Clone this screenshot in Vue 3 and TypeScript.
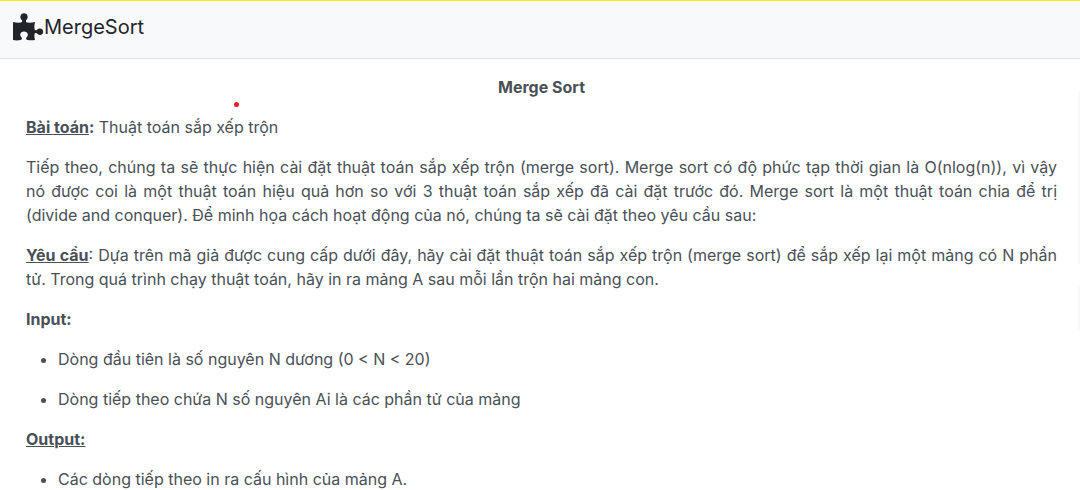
<script setup lang="ts">
const title: string = 'MergeSort'
const inputs: string[] = [
  'Dòng đầu tiên là số nguyên N dương (0 < N < 20)',
  'Dòng tiếp theo chứa N số nguyên Ai là các phần tử của mảng',
]
const outputs: string[] = ['Các dòng tiếp theo in ra cấu hình của mảng A.']
</script>

<template>
  <div class="page">
    <header class="topbar">
      <svg class="logo" viewBox="0 0 32 28" aria-hidden="true">
        <path
          d="M1 9 Q5 10 9 9.5 Q10.6 9.2 10.2 7.6 C8.6 6 8.2 4.6 8.4 3.4 C8.8 1.2 10.2 .3 12 .3 C13.9 .3 15.4 1.4 15.6 3.4 C15.8 5 15 6.2 14 7.4 Q13.5 9.2 15 9.5 Q19 10 23 9 Q22 13 22.5 16 Q22.9 17.6 24.4 17.3 C25.6 16 26.6 15.4 28 15.4 C30 15.5 31.2 16.8 31.2 18.8 C31.2 20.7 30 22 28 22 C26.5 22 25.5 21.2 24.4 20.1 Q22.8 19.6 22.5 21 Q22 24 23 27 Q19.500 27.700 15.500 27 Q13.700 26.500 14 25 C15.400 23.800 16 22.700 15.800 21.200 C15.500 19.400 14 18.400 12 18.400 C10 18.400 8.500 19.400 8.300 21.200 C8.100 22.700 8.800 23.800 10 25 Q10.400 26.600 8.500 27.100 Q4.500 27.700 1 27 Z"
        />
      </svg>
      <span class="brand">{{ title }}</span>
    </header>

    <main class="content">
      <span class="marker" aria-hidden="true"></span>
      <h1>Merge Sort</h1>
      <p><strong><u>Bài toán</u>:</strong> Thuật toán sắp xếp trộn</p>
      <p>
        Tiếp theo, chúng ta sẽ thực hiện cài đặt thuật toán sắp xếp trộn (merge sort). Merge sort có độ
        phức tạp thời gian là O(nlog(n)), vì vậy nó được coi là một thuật toán hiệu quả hơn so với 3
        thuật toán sắp xếp đã cài đặt trước đó. Merge sort là một thuật toán chia để trị (divide and
        conquer). Để minh họa cách hoạt động của nó, chúng ta sẽ cài đặt theo yêu cầu sau:
      </p>
      <p>
        <strong><u>Yêu cầu</u></strong>: Dựa trên mã giả được cung cấp dưới đây, hãy cài đặt thuật toán
        sắp xếp trộn (merge sort) để sắp xếp lại một mảng có N phần tử. Trong quá trình chạy thuật
        toán, hãy in ra mảng A sau mỗi lần trộn hai mảng con.
      </p>
      <p><strong>Input:</strong></p>
      <ul>
        <li v-for="item in inputs" :key="item">{{ item }}</li>
      </ul>
      <p><strong><u>Output:</u></strong></p>
      <ul>
        <li v-for="item in outputs" :key="item">{{ item }}</li>
      </ul>
      <div class="side-shadow upper"></div>
      <div class="side-shadow lower"></div>
    </main>
  </div>
</template>

<style>
body {
  overflow: hidden;
  background: #fff;
}
</style>

<style scoped>
.page {
  font-family: Inter, "Noto Sans", sans-serif;
  font-size: 16px;
  line-height: 24px;
  color: #495057;
}
.topbar {
  box-sizing: border-box;
  height: 59px;
  padding: 12px 12px 16px;
  display: flex;
  align-items: flex-start;
  background: #f8f9fa;
  border-top: 1px solid #ffe900;
  border-bottom: 1px solid #dee2e6;
}
.logo {
  width: 32px;
  height: 28px;
  fill: #212529;
}
.brand {
  font-size: 20px;
  line-height: 28px;
  color: #212529;
}
.content {
  position: relative;
  padding: 16px 23px 0 26px;
}
h1 {
  margin: 0 0 16px;
  font-size: 16px;
  line-height: 24px;
  font-weight: 700;
  text-align: center;
}
p {
  margin: 0 0 16px;
  text-align: justify;
}
strong {
  font-weight: 700;
}
ul {
  margin: 0;
  padding-left: 32px;
}
li {
  margin-bottom: 16px;
}
.marker {
  position: absolute;
  left: 234px;
  top: 43px;
  width: 5px;
  height: 5px;
  border-radius: 50%;
  background: #ed1c24;
}
.side-shadow {
  position: absolute;
  right: 0;
  width: 2px;
  background: #f9f9f9;
}
.upper {
  top: 32px;
  height: 174px;
}
.lower {
  top: 226px;
  height: 46px;
}
</style>
